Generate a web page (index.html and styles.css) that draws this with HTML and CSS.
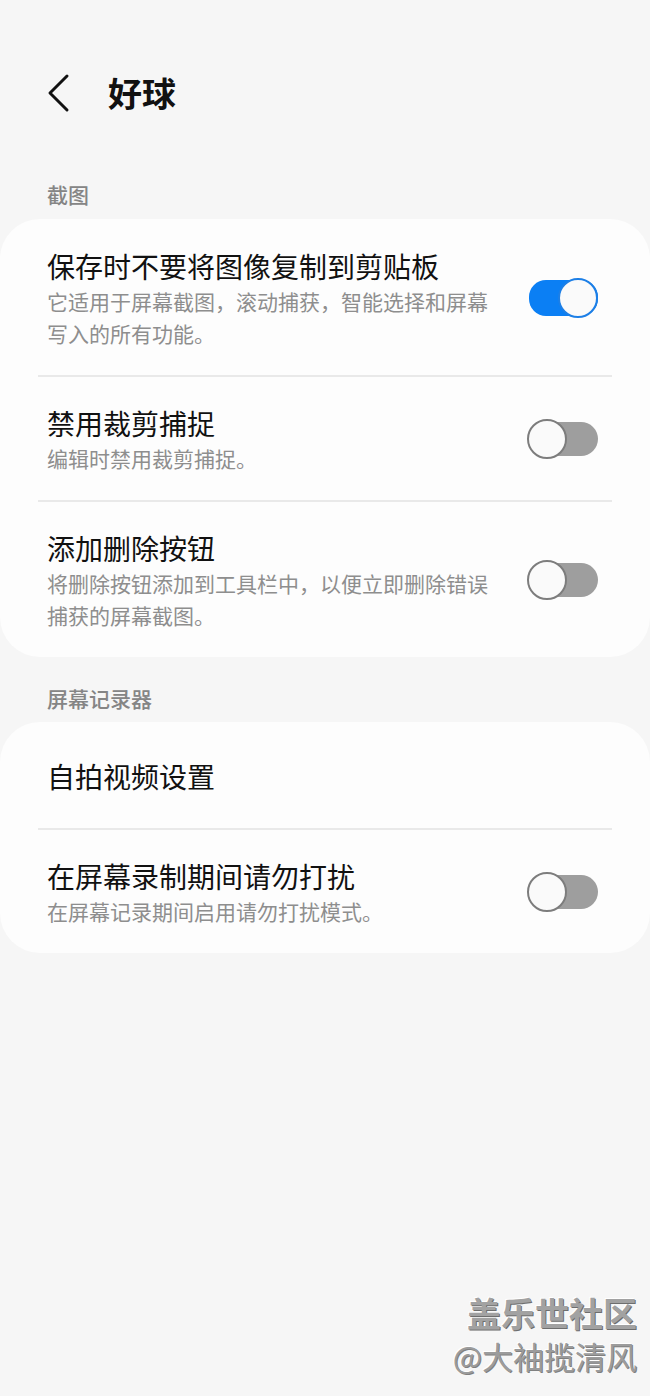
FILE: index.html
```html
<!DOCTYPE html>
<html lang="zh-CN">
<head>
    <meta charset="UTF-8">
    <meta name="viewport" content="width=device-width, initial-scale=1.0">
    <title>好球</title>
    <link rel="stylesheet" href="styles.css">
</head>
<body>
    <div class="page">
        <div class="topbar">
            <svg class="back" width="26" height="40" viewBox="0 0 26 40">
                <path d="M21 3 L4 20 L21 37" fill="none" stroke="#111" stroke-width="3" stroke-linecap="round" stroke-linejoin="round"/>
            </svg>
            <h1>好球</h1>
        </div>

        <div class="section-title first">截图</div>
        <div class="card">
            <div class="row">
                <div class="text">
                    <div class="title">保存时不要将图像复制到剪贴板</div>
                    <div class="sub">它适用于屏幕截图，滚动捕获，智能选择和屏幕写入的所有功能。</div>
                </div>
                <div class="switch on"><span class="thumb"></span></div>
            </div>
            <div class="row">
                <div class="text">
                    <div class="title">禁用裁剪捕捉</div>
                    <div class="sub">编辑时禁用裁剪捕捉。</div>
                </div>
                <div class="switch"><span class="thumb"></span></div>
            </div>
            <div class="row">
                <div class="text">
                    <div class="title">添加删除按钮</div>
                    <div class="sub">将删除按钮添加到工具栏中，以便立即删除错误捕获的屏幕截图。</div>
                </div>
                <div class="switch"><span class="thumb"></span></div>
            </div>
        </div>

        <div class="section-title">屏幕记录器</div>
        <div class="card">
            <div class="row single">
                <div class="text">
                    <div class="title">自拍视频设置</div>
                </div>
            </div>
            <div class="row">
                <div class="text">
                    <div class="title">在屏幕录制期间请勿打扰</div>
                    <div class="sub">在屏幕记录期间启用请勿打扰模式。</div>
                </div>
                <div class="switch"><span class="thumb"></span></div>
            </div>
        </div>

        <div class="watermark">
            <div class="wm-big">盖乐世社区</div>
            <div class="wm-small">@大袖揽清风</div>
        </div>
    </div>
</body>
</html>
```

FILE: styles.css
```css
html, body {
    margin: 0;
    padding: 0;
}
body {
    background-color: #f6f6f6;
    font-family: "Noto Sans CJK SC", "Noto Sans", sans-serif;
    color: #111;
}
.page {
    position: relative;
    height: 1396px;
    overflow: hidden;
}

.topbar {
    display: flex;
    align-items: center;
    height: 66px;
    margin-top: 60px;
    padding-left: 46px;
}
.topbar .back {
    display: block;
}
.topbar h1 {
    margin: 0 0 0 36px;
    font-size: 34px;
    font-weight: 700;
    line-height: 66px;
}

.section-title {
    padding: 28px 0 11px 47px;
    font-size: 21px;
    line-height: 26px;
    font-weight: 500;
    color: #858585;
}
.section-title.first {
    padding-top: 55px;
    padding-bottom: 12px;
}

.card {
    background-color: #fdfdfd;
    border-radius: 40px;
}
.row {
    display: flex;
    align-items: center;
    padding: 28px 52px 26px 47px;
    position: relative;
}
.row + .row {
    padding-top: 29px;
}
.row.single {
    padding-top: 35px;
    padding-bottom: 33px;
}
.row .text {
    flex: 1;
    padding-right: 30px;
}
.row .title {
    font-size: 28px;
    line-height: 38px;
    color: #111;
}
.row .sub {
    font-size: 21px;
    line-height: 32px;
    color: #8e8e8e;
    max-width: 450px;
}

/* inset divider between rows */
.row + .row::before {
    content: "";
    position: absolute;
    top: 0;
    left: 38px;
    right: 38px;
    height: 2px;
    background-color: #e9e9e9;
}

.switch {
    position: relative;
    width: 71px;
    height: 40px;
    flex-shrink: 0;
}
.switch::before {
    content: "";
    position: absolute;
    left: 2px;
    right: 0;
    top: 3px;
    bottom: 3px;
    border-radius: 17px;
    background-color: #9e9e9e;
}
.switch .thumb {
    position: absolute;
    top: 0;
    left: 0;
    width: 36px;
    height: 36px;
    border-radius: 50%;
    border: 2px solid #7d7d7d;
    background-color: #fafafa;
}
.switch.on::before {
    background-color: #0b7ff4;
    top: 2px;
    bottom: 2px;
}
.switch.on .thumb {
    left: auto;
    right: 0;
    border-color: #1d7fe6;
}

.watermark {
    position: absolute;
    right: 13px;
    bottom: 18px;
    text-align: right;
    color: #a2a2a2;
}
.wm-big {
    font-size: 34px;
    line-height: 42px;
    font-weight: 700;
    text-shadow: 1px 1px 0 #6e6e6e, -1px -1px 0 #ffffff;
}
.wm-small {
    font-size: 31px;
    line-height: 44px;
    font-weight: 400;
    color: #9c9c9c;
    text-shadow: 1px 1px 0 #808080, -1px -1px 0 #ffffff;
}
```
